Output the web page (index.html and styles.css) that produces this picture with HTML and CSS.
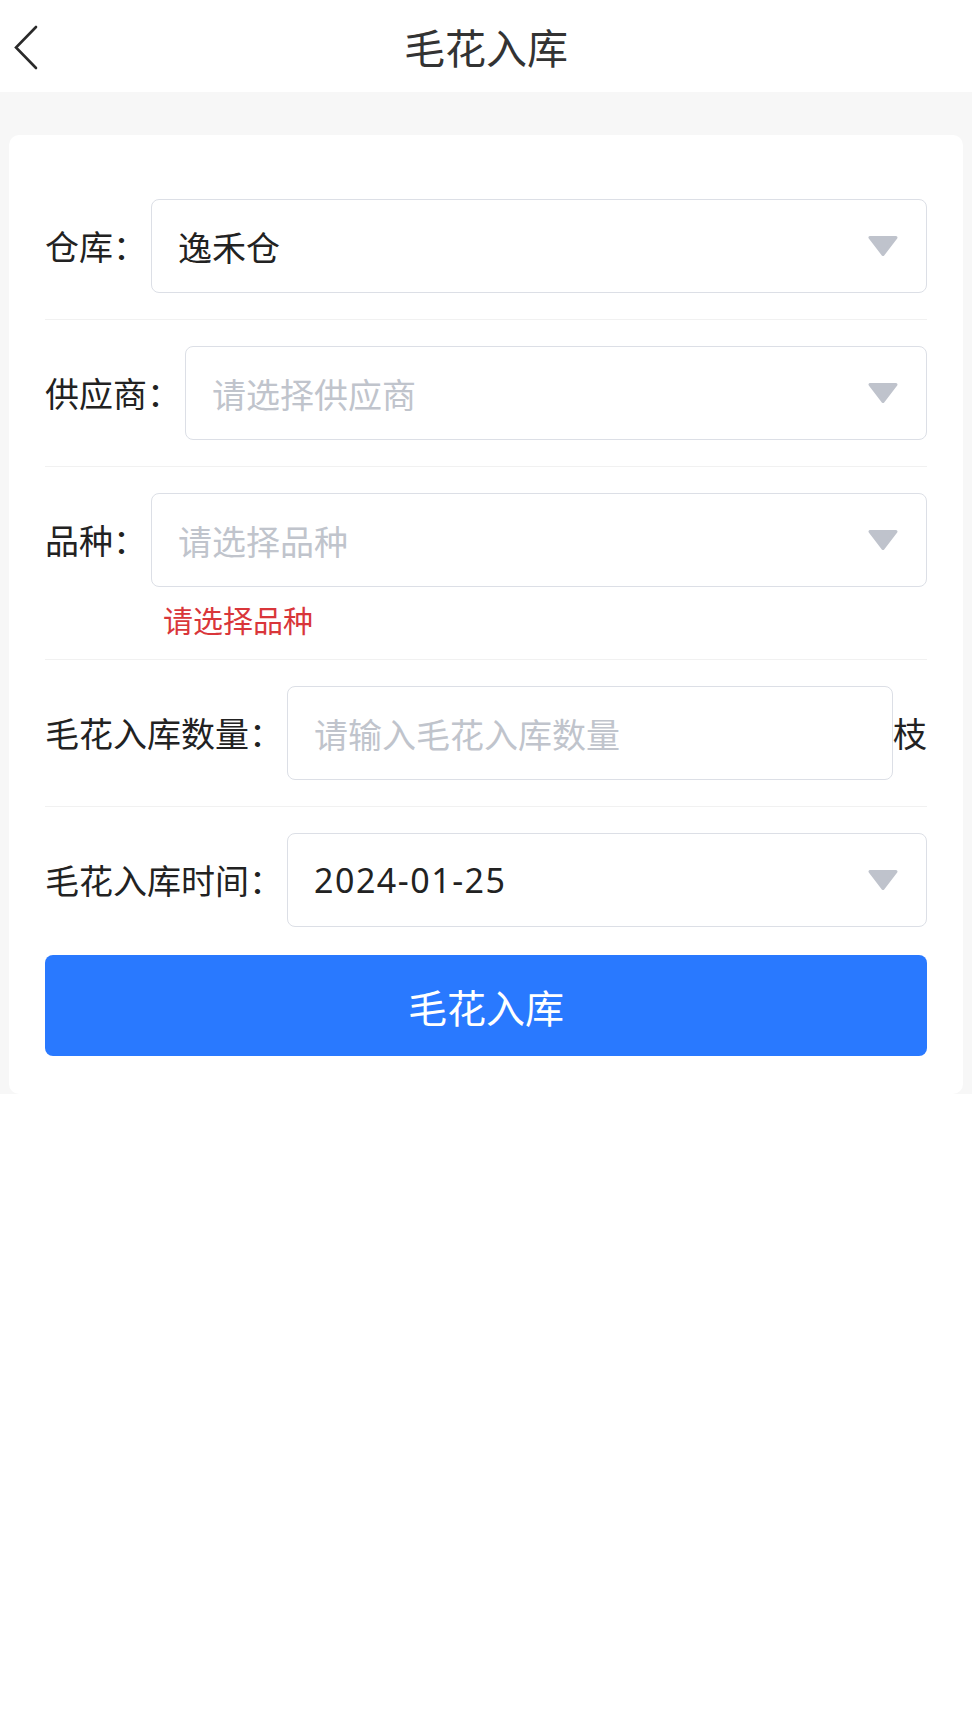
FILE: index.html
```html
<!DOCTYPE html>
<html lang="zh-CN">
<head>
<meta charset="utf-8">
<title>毛花入库</title>
<link rel="stylesheet" href="styles.css">
</head>
<body>
<header class="topbar">
  <span class="back" aria-label="返回">
    <svg width="30" height="50" viewBox="0 0 30 50"><polyline points="23,3 3,23.5 23,44" fill="none" stroke="#2a2a2a" stroke-width="2.6" stroke-linecap="round" stroke-linejoin="miter"/></svg>
  </span>
  <h1 class="title">毛花入库</h1>
</header>
<main class="page">
  <section class="card">
    <div class="row">
      <div class="label">仓库：</div>
      <div class="control">
        <div class="field">
          <span class="value">逸禾仓</span>
          <svg class="caret" width="32" height="22" viewBox="0 0 32 22"><polygon points="3,2.5 29,2.5 16,19.5" fill="#bfc3cc" stroke="#bfc3cc" stroke-width="3" stroke-linejoin="round"/></svg>
        </div>
      </div>
    </div>
    <div class="row">
      <div class="label">供应商：</div>
      <div class="control">
        <div class="field">
          <span class="placeholder">请选择供应商</span>
          <svg class="caret" width="32" height="22" viewBox="0 0 32 22"><polygon points="3,2.5 29,2.5 16,19.5" fill="#bfc3cc" stroke="#bfc3cc" stroke-width="3" stroke-linejoin="round"/></svg>
        </div>
      </div>
    </div>
    <div class="row">
      <div class="label">品种：</div>
      <div class="control">
        <div class="field">
          <span class="placeholder">请选择品种</span>
          <svg class="caret" width="32" height="22" viewBox="0 0 32 22"><polygon points="3,2.5 29,2.5 16,19.5" fill="#bfc3cc" stroke="#bfc3cc" stroke-width="3" stroke-linejoin="round"/></svg>
        </div>
        <div class="error">请选择品种</div>
      </div>
    </div>
    <div class="row">
      <div class="label">毛花入库数量：</div>
      <div class="control control-unit">
        <div class="field">
          <span class="placeholder">请输入毛花入库数量</span>
        </div>
        <span class="unit">枝</span>
      </div>
    </div>
    <div class="row row-last">
      <div class="label">毛花入库时间：</div>
      <div class="control">
        <div class="field">
          <span class="value date">2024-01-25</span>
          <svg class="caret" width="32" height="22" viewBox="0 0 32 22"><polygon points="3,2.5 29,2.5 16,19.5" fill="#bfc3cc" stroke="#bfc3cc" stroke-width="3" stroke-linejoin="round"/></svg>
        </div>
      </div>
    </div>
    <button class="submit" type="button">毛花入库</button>
  </section>
</main>
</body>
</html>
```
FILE: styles.css
```css
* { box-sizing: border-box; }
html, body { margin: 0; padding: 0; background: #ffffff; }
body {
  font-family: "Noto Sans CJK SC", "Noto Sans", sans-serif;
  color: #222222;
}
.topbar {
  height: 92px;
  display: flex;
  align-items: center;
  justify-content: center;
  position: relative;
  background: #ffffff;
}
.back {
  position: absolute;
  left: 13px;
  top: 24px;
  width: 30px;
  height: 50px;
  display: block;
}
.back svg { display: block; }
.title {
  margin: 0;
  font-size: 41px;
  font-weight: 400;
  color: #333333;
  line-height: 1;
}
.page {
  background: #f7f7f7;
  padding: 43px 9px 0 9px;
}
.card {
  background: #ffffff;
  border-radius: 10px;
  padding: 38px 36px 38px 36px;
}
.row {
  display: flex;
  align-items: flex-start;
  padding: 26px 0;
  border-bottom: 1px solid #f1f1f1;
}
.row-last {
  border-bottom: none;
  padding-bottom: 28px;
}
.label {
  flex: none;
  height: 94px;
  line-height: 94px;
  font-size: 34px;
  color: #222222;
  white-space: nowrap;
  margin-right: 4px;
}
.control {
  flex: 1;
  min-width: 0;
}
.control-unit {
  display: flex;
  align-items: center;
}
.control-unit .field { flex: 1; }
.field {
  height: 94px;
  border: 1.5px solid #dcdfe6;
  border-radius: 8px;
  display: flex;
  align-items: center;
  justify-content: space-between;
  padding: 0 27px 0 26px;
  font-size: 34px;
}
.value { color: #222222; }
.date {
  font-family: "Noto Sans", "Open Sans", sans-serif;
  letter-spacing: 1.5px;
}
.placeholder { color: #c0c4cc; }
.caret { display: block; flex: none; }
.unit {
  flex: none;
  font-size: 34px;
  color: #222222;
  line-height: 94px;
}
.error {
  color: #d9363a;
  font-size: 30px;
  line-height: 40px;
  margin-top: 12px;
  margin-bottom: -6px;
  padding-left: 12px;
}
.submit {
  display: block;
  width: 100%;
  height: 101px;
  border: none;
  border-radius: 8px;
  background: #2979ff;
  color: #ffffff;
  font-family: "Noto Sans CJK SC", sans-serif;
  font-size: 39px;
  padding: 0;
}
```
